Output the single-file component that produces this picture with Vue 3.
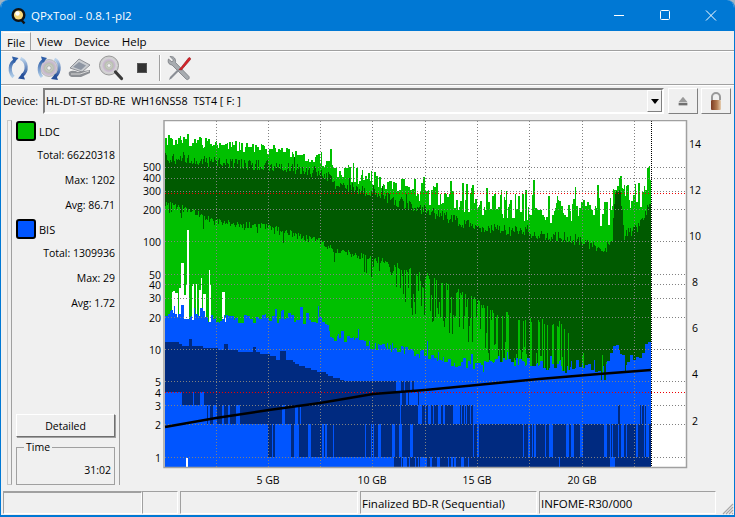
<script setup>
// seeded random so the trace stays the same between runs
let seed = 48213
function rnd() {
  seed = (seed + 0x6d2b79f5) | 0
  let t = Math.imul(seed ^ (seed >>> 15), 1 | seed)
  t = (t + Math.imul(t ^ (t >>> 7), 61 | t)) ^ t
  return ((t ^ (t >>> 14)) >>> 0) / 4294967296
}

function lerp(points, x) {
  for (let i = 1; i < points.length; i++) {
    if (x <= points[i][0]) {
      const [x0, y0] = points[i - 1]
      const [x1, y1] = points[i]
      return y0 + ((y1 - y0) * (x - x0)) / (x1 - x0)
    }
  }
  return points[points.length - 1][1]
}

const lightTop = [[166, 138], [217, 142], [269, 148], [321, 158], [335, 168], [374, 176], [426, 186], [478, 196], [495, 200], [583, 206], [600, 210], [612, 205], [618, 168], [624, 190], [640, 190], [652, 172]]
const darkTop = [[166, 155], [217, 160], [269, 163], [321, 170], [335, 181], [374, 191], [426, 208], [478, 225], [530, 230], [583, 238], [600, 248], [613, 243], [616, 188], [621, 188], [625, 233], [640, 223], [652, 198]]
const darkBottom = [[166, 200], [190, 207], [217, 218], [269, 224], [321, 238], [335, 247], [374, 255], [426, 272], [450, 284], [478, 298], [495, 310], [530, 315], [560, 320], [583, 340], [652, 345]]
const blueTop = [[166, 309], [217, 314], [269, 314], [321, 316], [335, 333], [374, 341], [400, 345], [426, 351], [450, 358], [478, 361], [500, 352], [530, 358], [550, 363], [583, 363], [605, 364], [612, 350], [617, 338], [625, 358], [640, 348], [652, 336]]
const navyTop = [[166, 341], [183, 345], [217, 349], [269, 354], [275, 359], [290, 361], [305, 367], [320, 372], [345, 381], [700, 381]]

const columns = { light: '', dark: '', white: '', blue: '', navy: '' }
const rect = (x, y0, y1) => (y1 > y0 ? `M${x} ${y0}V${y1}H${x + 1}V${y0}Z` : '')

// band of the navy trace: top, bottom, chance of a column being filled
const bands = [
  [381, 392, (x) => (x < 395 ? 1 : x < 415 ? 0.5 : 0)],
  [392, 405, (x) => (x < 183 ? 0 : x < 207 ? 0.65 : x < 400 ? 1 : x < 420 ? 0.5 : 0)],
  [405, 424, (x) => (x < 207 ? 0 : x < 250 ? 0.5 : x < 265 ? 0.8 : x < 420 ? 0.97 : x < 475 ? 0.5 : (x > 616 && x < 621) || x > 640 ? 0.5 : 0)],
  [424, 457, (x) => (x < 267 ? 0 : x < 300 ? 0.18 : x < 345 ? 0.65 : x < 520 ? 0.93 : 0.8)],
  [457, 467, (x) => (x < 395 ? 0 : x < 470 ? 0.65 : 0.97)]
]
const bandState = bands.map(() => false)

function topNoise(x) {
  // the top of the trace gets rougher towards the end of the disc
  const rough = x < 330 ? 11 : x < 420 ? 18 : 30
  let d = rough * rnd() - rough * 0.35
  if (rnd() < 0.1) d -= rough * 0.7 * rnd()
  return d
}

function deepDark(x) {
  // how far a dark column runs below the dark band, and how often
  if (x < 330) return rnd() < 0.1 ? 12 * rnd() : 0
  if (x < 400) return rnd() < 0.22 ? 20 * rnd() : 0
  if (x < 500) return rnd() < 0.42 ? 10 + 42 * rnd() : 0
  if (x < 570) return rnd() < 0.62 ? 30 + 50 * rnd() : 0
  return rnd() < 0.9 ? 80 : 30 * rnd()
}

let blueHold = 0
let blueRun = 0
let navyHold = 0
let navyRun = 0
let topHold = 0
let topRun = 0
let gapHold = 0
let gapRun = 0
for (let x = 166; x < 652; x++) {
  if (topRun <= 0) {
    topHold = lerp(lightTop, x) + topNoise(x)
    topRun = 1 + Math.floor(rnd() * 2)
  }
  topRun--
  let dTop = lerp(darkTop, x) + 11 * rnd() - 3
  if (rnd() < 0.08) dTop -= 7 * rnd()

  const dBottom = lerp(darkBottom, x) + 7 * rnd() + deepDark(x)

  if (blueRun <= 0) {
    blueHold = lerp(blueTop, x) + 9 * rnd()
    if (rnd() < 0.14) blueHold -= 12 * rnd()
    if (x > 470 && rnd() < 0.2) blueHold += 12 * rnd()
    blueRun = 1 + Math.floor(rnd() * 3)
  }
  blueRun--
  if (navyRun <= 0) {
    navyHold = Math.round(lerp(navyTop, x) / 2) * 2
    if (x < 300 && rnd() < 0.12) navyHold -= 4 + 5 * rnd()
    navyRun = 2 + Math.floor(rnd() * 5)
  }
  navyRun--

  columns.light += rect(x, Math.round(topHold), 380)
  columns.dark += rect(x, Math.round(dTop), Math.round(dBottom))

  // the white gaps under the trace at the very start of the disc
  if (gapRun <= 0) {
    gapHold = rnd() < (x < 212 ? 0.62 : 0.2) ? 256 + 40 * rnd() : 0
    gapRun = 1 + Math.floor(rnd() * 3)
  }
  gapRun--
  if (x < 232 && (gapHold || x === 188 || x === 189)) {
    const gap = x === 188 || x === 189 ? 230 : x < 212 ? gapHold : gapHold + 25
    columns.white += rect(x, Math.round(gap), Math.round(blueHold) + (x > 205 ? 8 : 0))
  }

  columns.blue += rect(x, Math.round(blueHold), 467)
  if (x < 345) columns.navy += rect(x, navyHold, 381)

  bands.forEach((b, i) => {
    const p = b[2](x)
    // keep the last state half the time, gives stripes wider than one pixel
    if (p === 0 || p === 1 || rnd() > 0.45) bandState[i] = rnd() < p
    if (bandState[i]) columns.navy += rect(x, b[0], b[1])
  })
}

const hLines = [167, 178, 191, 209, 241, 274, 284, 298, 317, 349, 381, 405, 424, 457]
const vLines = [217, 269, 321, 373, 426, 478, 530, 583, 635]
const leftTicks = [[500, 171], [400, 182], [300, 195], [200, 214], [100, 246], [50, 279], [40, 289], [30, 302], [20, 322], [10, 354], [5, 386], [4, 397], [3, 410], [2, 429], [1, 462]]
const rightTicks = [[14, 148], [12, 194], [10, 240], [8, 286], [6, 332], [4, 378], [2, 425]]
const xTicks = [['5 GB', 269], ['10 GB', 373], ['15 GB', 478], ['20 GB', 583]]
const speed = '166,427 217,418 270,410 321,403 374,394 426,390 478,385 540,379 600,374 652,370'

const ldcStats = [['Total:', '66220318'], ['Max:', '1202'], ['Avg:', '86.71']]
const bisStats = [['Total:', '1309936'], ['Max:', '29'], ['Avg:', '1.72']]
</script>

<template>
  <div class="window">
    <div class="titlebar">
      <svg class="app-icon" width="18" height="18" viewBox="0 0 18 18">
        <circle cx="8.5" cy="8" r="7" fill="#111" />
        <circle cx="8.5" cy="8" r="4.6" fill="#f6d77a" />
        <circle cx="7.5" cy="6.5" r="2.2" fill="#fff" />
        <path d="M11 12.5l3.5 4" stroke="#111" stroke-width="2.4" />
      </svg>
      <span class="title">QPxTool - 0.8.1-pl2</span>
      <div class="caption">
        <svg width="46" height="31" viewBox="0 0 46 31"><path d="M18 15.5h10" stroke="#fff" /></svg>
        <svg width="46" height="31" viewBox="0 0 46 31"><rect x="18.5" y="10.5" width="9" height="9" rx="1" fill="none" stroke="#fff" /></svg>
        <svg width="46" height="31" viewBox="0 0 46 31"><path d="M18 10.5l10 10M28 10.5l-10 10" stroke="#fff" /></svg>
      </div>
    </div>

    <div class="menubar">
      <span class="menu active">File</span>
      <span class="menu">View</span>
      <span class="menu">Device</span>
      <span class="menu">Help</span>
    </div>

    <div class="toolbar">
      <div class="tool">
        <svg width="26" height="26" viewBox="0 0 26 26">
          <defs>
            <linearGradient id="arcA" x1="0" y1="0" x2="0" y2="1"><stop offset="0" stop-color="#2f5fa8" /><stop offset="1" stop-color="#b4d0ea" /></linearGradient>
            <linearGradient id="arcB" x1="0" y1="0" x2="0" y2="1"><stop offset="0" stop-color="#bcd4ec" /><stop offset="1" stop-color="#27509a" /></linearGradient>
          </defs>
          <path d="M10 5.500C4.500 8 3.500 17 8.500 22" fill="none" stroke="url(#arcA)" stroke-width="3.200" />
          <path d="M7 1.500l6.500 1.500-4.500 5z" fill="#2f5fa8" />
          <path d="M15.500 3.500C22.500 6 23 16.500 17 20.500" fill="none" stroke="url(#arcB)" stroke-width="3.200" />
          <path d="M20 24.500l-7-1 4.500-5.500z" fill="#27509a" />
        </svg>
      </div>
      <div class="tool">
        <svg width="26" height="26" viewBox="0 0 26 26">
          <defs>
            <radialGradient id="disc"><stop offset="0" stop-color="#eee" /><stop offset="0.5" stop-color="#b9c0b0" /><stop offset="0.75" stop-color="#c9b8d0" /><stop offset="1" stop-color="#d8d8d8" /></radialGradient>
          </defs>
          <circle cx="13" cy="13" r="8.500" fill="url(#disc)" stroke="#999" stroke-width="0.6" />
          <circle cx="13" cy="13" r="2.200" fill="#f0f0f0" stroke="#888" stroke-width="0.6" />
          <path d="M8 5C2.500 8 1.500 17 6 22" fill="none" stroke="url(#arcA)" stroke-width="3" />
          <path d="M5 1.500l6 1.500-4 5z" fill="#2f5fa8" />
          <path d="M18.500 4C24.500 7 25 17 19 21.500" fill="none" stroke="url(#arcB)" stroke-width="3" />
          <path d="M22 25l-7-1 4.500-5.500z" fill="#27509a" />
        </svg>
      </div>
      <div class="tool">
        <svg width="26" height="26" viewBox="0 0 26 26">
          <path d="M3 13l9-9 11 6-8 7z" fill="#c9ccd0" stroke="#7d8087" stroke-width="0.8" />
          <path d="M6 12l6-5 7 3.500-5 4.500z" fill="#8e96a3" />
          <path d="M2 17c3-2 6-1 9 0l12-2v3l-9 4H6c-3 0-5-2-4-5z" fill="#8c8f94" />
          <path d="M4 19h9l9-3" stroke="#d7d7d7" fill="none" />
        </svg>
      </div>
      <div class="tool">
        <svg width="26" height="26" viewBox="0 0 26 26">
          <circle cx="11" cy="10.500" r="9.500" fill="#cfcfcf" stroke="#999" />
          <circle cx="11" cy="10.500" r="7.500" fill="url(#disc)" />
          <circle cx="11" cy="10.500" r="1.800" fill="#f4f4f4" stroke="#999" stroke-width="0.5" />
          <path d="M17.500 17l6 6.500" stroke="#3a3a3a" stroke-width="3.200" stroke-linecap="round" />
        </svg>
      </div>
      <div class="tool">
        <span class="stop"></span>
      </div>
      <span class="tool-sep"></span>
      <div class="tool wide">
        <svg width="26" height="26" viewBox="0 0 26 26">
          <path d="M4 1.500l3.500 3.500-1.500 2L2.500 4C1.500 7 2.500 9.500 6 10l14 14c1.500 1.500 4 0 3-2.500L9.500 7.500C10 4 8 1 4 1.500z" fill="#a8acb0" stroke="#6d7075" stroke-width="0.7" />
          <path d="M3 25l1-3 8-8 1.500 1.500-8 8z" fill="#8b8f96" />
          <path d="M13 14.500l2-2L22.500 3c1-1 2.500 0 2 1.500L15.500 15z" fill="#d8222a" stroke="#8d1518" stroke-width="0.6" />
        </svg>
      </div>
    </div>

    <div class="devicebar">
      <label class="device-label">Device:</label>
      <div class="combo">
        <span class="combo-text">HL-DT-ST BD-RE&nbsp; WH16NS58&nbsp; TST4 [ F: ]</span>
        <span class="combo-btn"><i class="combo-arrow"></i></span>
      </div>
      <div class="square-btn">
        <svg width="14" height="14" viewBox="0 0 16 16">
          <path d="M8 3l5 6H3z" fill="#9a9a9a" />
          <rect x="3" y="10" width="10" height="3" fill="#6f6f6f" />
        </svg>
      </div>
      <div class="square-btn">
        <svg width="18" height="20" viewBox="0 0 18 20">
          <path d="M5 9V6a4 4 0 0 1 8 0v3" fill="none" stroke="#999" stroke-width="2" />
          <defs><linearGradient id="lock"><stop offset="0" stop-color="#7b3b22" /><stop offset="0.6" stop-color="#b47c52" /><stop offset="1" stop-color="#e6cdb0" /></linearGradient></defs>
          <rect x="4" y="9" width="10" height="10" rx="1" fill="url(#lock)" />
        </svg>
      </div>
    </div>

    <div class="main">
      <div class="side-grip"></div>
      <div class="side">
        <div class="legend"><span class="swatch ldc"></span>LDC</div>
        <div v-for="s in ldcStats" :key="s[0]" class="stat">{{ s[0] }} {{ s[1] }}</div>
        <div class="legend bis-row"><span class="swatch bis"></span>BIS</div>
        <div v-for="s in bisStats" :key="s[0]" class="stat">{{ s[0] }} {{ s[1] }}</div>
        <div class="side-space"></div>
        <div class="detailed">Detailed</div>
        <fieldset class="time">
          <legend>Time</legend>
          <div class="time-value">31:02</div>
        </fieldset>
      </div>

      <svg class="chart" width="610" height="372" viewBox="124 120 610 372">
        <rect x="165" y="120.500" width="522.500" height="347" fill="#fff" />
        <g shape-rendering="crispEdges">
          <path :d="columns.light" fill="#00c000" />
          <path :d="columns.dark" fill="#005a00" />
          <path :d="columns.white" fill="#fff" />
          <path :d="columns.blue" fill="#0055ff" />
          <path :d="columns.navy" fill="#002a80" />
          <rect x="187" y="458" width="2" height="9" fill="#fff" />
          <line v-for="y in hLines" :key="'h' + y" x1="166" x2="687" :y1="y + 0.5" :y2="y + 0.5" class="grid" />
          <line v-for="x in vLines" :key="'v' + x" y1="121" y2="467" :x1="x + 0.5" :x2="x + 0.5" class="grid" />
          <line x1="166" x2="687" y1="193.500" y2="193.500" class="limit" />
          <line x1="166" x2="687" y1="392.500" y2="392.500" class="limit" />
          <line x1="652.500" x2="652.500" y1="121" y2="467" class="end" />
        </g>
        <polyline :points="speed" fill="none" stroke="#000" stroke-width="2.600" />
        <rect x="165" y="120.500" width="522.500" height="347" fill="none" stroke="#a0a0a0" stroke-width="1.500" />
        <text v-for="t in leftTicks" :key="'l' + t[0]" x="162" :y="t[1]" text-anchor="end" class="tick">{{ t[0] }}</text>
        <text v-for="t in rightTicks" :key="'r' + t[0]" :x="t[0] > 9 ? 690 : 693" :y="t[1]" class="tick">{{ t[0] }}</text>
        <text v-for="t in xTicks" :key="t[0]" :x="t[1]" y="484" text-anchor="middle" class="tick">{{ t[0] }}</text>
      </svg>
    </div>

    <div class="statusbar">
      <div class="cell c1"></div>
      <div class="cell c2"></div>
      <div class="cell c3"></div>
      <div class="cell c4">Finalized BD-R (Sequential)</div>
      <div class="cell c5">INFOME-R30/000</div>
      <svg class="grip" width="12" height="12" viewBox="0 0 12 12">
        <path d="M11 1L1 11M11 4L4 11M11 7L7 11M11 10L10 11" stroke="#a8a8a8" stroke-width="1.200" />
      </svg>
    </div>
  </div>
</template>

<style scoped>
.window {
  width: 735px;
  height: 517px;
  box-sizing: border-box;
  background: #f0f0f0;
  border: solid #0078d4;
  border-width: 0 1px 2px 1px;
  border-radius: 8px 8px 0 0;
  display: flex;
  flex-direction: column;
  overflow: hidden;
  font-family: "Open Sans", "Liberation Sans", sans-serif;
  font-size: 10.500px;
  color: #000;
}

.titlebar {
  height: 31px;
  flex: none;
  background: #0078d4;
  display: flex;
  align-items: center;
  padding-left: 9px;
  color: #fff;
}

.app-icon {
  flex: none;
}

.title {
  margin-left: 3px;
  font-size: 11.500px;
}

.caption {
  margin-left: auto;
  display: flex;
  margin-right: 0;
}

.menubar {
  height: 19px;
  flex: none;
  display: flex;
  align-items: center;
  padding-left: 2px;
  border-bottom: 1px solid #a0a0a0;
  box-shadow: 0 1px 0 #fff;
}

.menu {
  padding: 2px 6px;
  height: 18px;
  line-height: 15px;
  box-sizing: border-box;
  font-size: 11.500px;
}

.menu.active {
  padding: 2px 5px 2px 4px;
  border-right: 1px solid #a0a0a0;
  border-top: 1px solid #fff;
}

.toolbar {
  height: 32px;
  flex: none;
  margin-top: 1px;
  display: flex;
  align-items: center;
  padding-left: 1px;
  border-bottom: 1px solid #a0a0a0;
  box-shadow: 0 1px 0 #fff;
  box-sizing: content-box;
}

.tool {
  width: 31px;
  height: 28px;
  display: flex;
  align-items: center;
  justify-content: center;
}

.stop {
  width: 10px;
  height: 10px;
  background: #333;
  box-shadow: inset 0 0 0 1px #555;
}

.tool-sep {
  width: 1px;
  height: 26px;
  background: #a0a0a0;
  box-shadow: 1px 0 0 #fff;
  margin-left: 2px;
}

.tool.wide {
  margin-left: 3px;
}

.devicebar {
  height: 35px;
  flex: none;
  display: flex;
  align-items: flex-start;
  padding: 3px 3px 0 2px;
  box-sizing: border-box;
}

.device-label {
  width: 40px;
  padding-top: 6px;
  flex: none;
}

.combo {
  width: 621px;
  height: 26px;
  flex: none;
  box-sizing: border-box;
  border: 2px solid;
  border-color: #808080 #fff #fff #808080;
  display: flex;
  align-items: center;
  justify-content: space-between;
  padding-left: 1px;
  margin-right: 4px;
}

.combo-text {
  font-size: 10.750px;
}

.combo-btn {
  width: 15px;
  height: 22px;
  box-sizing: border-box;
  border: 1px solid;
  border-color: #fff #808080 #808080 #fff;
  display: flex;
  align-items: center;
  justify-content: center;
}

.combo-arrow {
  width: 0;
  height: 0;
  border: 4px solid transparent;
  border-top: 5px solid #000;
  border-bottom: 0;
}

.square-btn {
  width: 30px;
  height: 26px;
  flex: none;
  box-sizing: border-box;
  border: 1px solid;
  border-color: #fff #808080 #808080 #fff;
  margin-right: 3px;
  display: flex;
  align-items: center;
  justify-content: center;
}

.main {
  flex: 1;
  min-height: 0;
  display: flex;
  align-items: flex-start;
}

.side-grip {
  width: 5px;
  height: 365px;
  flex: none;
  margin-left: 6px;
  border: solid #c8c8c8;
  border-width: 1px 1px 1px 1px;
  border-right-color: #a0a0a0;
  box-sizing: border-box;
}

.side {
  width: 108px;
  height: 365px;
  flex: none;
  box-sizing: border-box;
  padding: 1px 3px 0 4px;
  border-right: 1px solid #a0a0a0;
  display: flex;
  flex-direction: column;
}

.legend {
  height: 20px;
  display: flex;
  align-items: center;
  gap: 3px;
  font-size: 11px;
}

.swatch {
  width: 20px;
  height: 20px;
  box-sizing: border-box;
  border: 2px solid #000;
  border-radius: 3px;
}

.swatch.ldc {
  background: #00c000;
}

.swatch.bis {
  background: #0055ff;
}

.bis-row {
  margin-top: 3px;
}

.stat {
  height: 25px;
  text-align: right;
  line-height: 28px;
  padding-right: 1px;
}

.side-space {
  flex: 1;
}

.detailed {
  height: 23px;
  flex: none;
  box-sizing: border-box;
  border: 1px solid;
  border-color: #fff #707070 #707070 #fff;
  box-shadow: 1px 1px 0 #a0a0a0;
  text-align: center;
  line-height: 22px;
  margin-right: 1px;
}

.time {
  height: 44px;
  flex: none;
  margin: 4px 1px 0 0;
  box-sizing: border-box;
  border: 1px solid #a0a0a0;
  padding: 0 3px;
  min-width: 0;
}

.time legend {
  padding: 0 2px;
  margin-left: 4px;
  line-height: 12px;
}

.time-value {
  text-align: right;
  padding-top: 10px;
  line-height: 14px;
}

.chart {
  flex: none;
  margin-left: 3px;
  display: block;
}

.grid {
  stroke: #808080;
  stroke-width: 1;
  stroke-dasharray: 1 2;
}

.limit {
  stroke: #f00000;
  stroke-width: 1;
  stroke-dasharray: 1 2;
}

.end {
  stroke: #000;
  stroke-width: 1;
  stroke-dasharray: 1 1;
}

.tick {
  font-size: 10.500px;
  fill: #000;
}

.statusbar {
  height: 24px;
  flex: none;
  display: flex;
  padding: 0 0 0 2px;
  position: relative;
}

.cell {
  height: 23px;
  box-sizing: border-box;
  border: solid;
  border-width: 1px;
  border-color: #a0a0a0 #fff #fff #a0a0a0;
  line-height: 24px;
  padding-left: 1px;
  white-space: nowrap;
  overflow: hidden;
  flex: none;
}

.c1 { width: 139px; border-top-width: 2px; }
.c2 { width: 36px; margin-right: 2px; }
.c3 { width: 178px; margin-right: 2px; }
.c4 { width: 177px; margin-right: 2px; font-size: 11.500px; }
.c5 { width: 177px; font-size: 11.500px; }

.grip {
  position: absolute;
  right: 0;
  bottom: 0;
}
</style>

<style>
html, body {
  background: #9fb4c4;
  overflow: hidden;
}
</style>
